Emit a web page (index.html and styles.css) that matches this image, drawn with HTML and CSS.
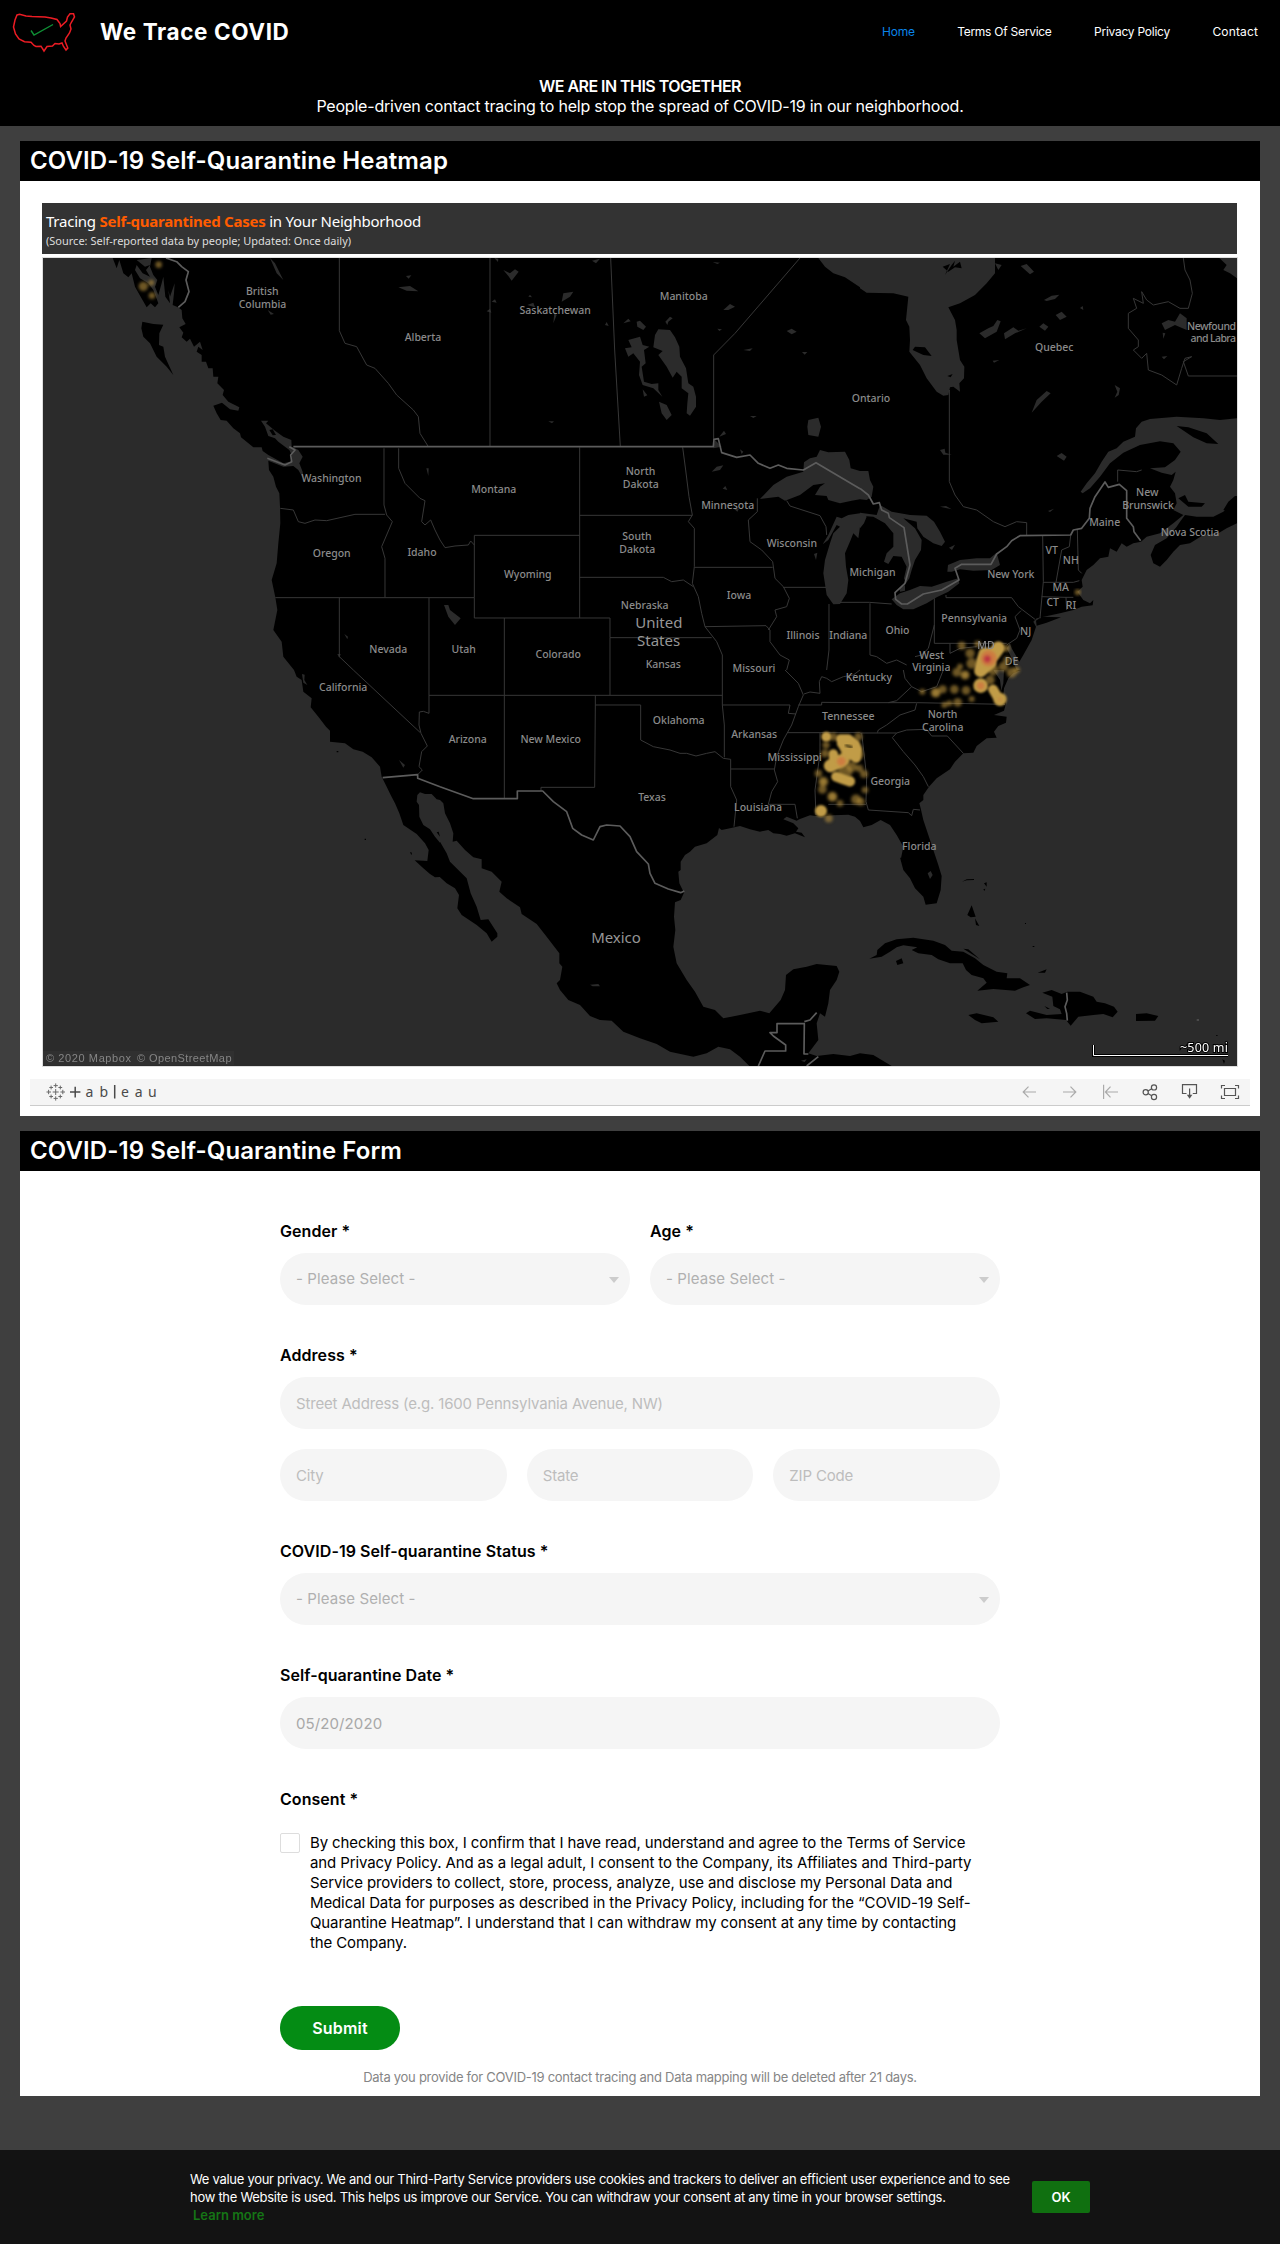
FILE: index.html
```html
<!DOCTYPE html>
<html lang="en">
<head>
<meta charset="utf-8">
<title>We Trace COVID</title>
<link rel="stylesheet" href="styles.css">
</head>
<body>
<header class="site-header">
  <div class="topbar">
    <a class="brand" href="#">
      <svg class="brand-mark" viewBox="10 10 68 44" width="68" height="44"><path class="usa" d="M17 15 19.6 14.3 26 16 32 16.6 45 17 51 18 57 19.5 60 23.5 60.6 26.5 66.5 21 67.5 17 70 13.7 73.5 13.8 74.5 17 71.5 22 70 25 71 29 69.5 33 66 38 65 41 67.8 48 66 50 63.5 46.5 62 43 59 44 55 43.5 52.5 46 47 46.5 44 51 41 46.2 36 46.5 34 45.5 31 42.3 24.5 41.7 19 39 15.5 34 13.5 27 15 20Z"/><path class="tick" d="M31 30.5 34 35 53 24.5"/></svg>
      <span class="brand-name">We Trace COVID</span>
    </a>
    <nav class="menu">
      <a class="active" href="#">Home</a>
      <a href="#">Terms Of Service</a>
      <a href="#">Privacy Policy</a>
      <a class="last" href="#">Contact</a>
    </nav>
  </div>
  <div class="tagline">
    <strong>WE ARE IN THIS TOGETHER</strong>
    <p>People-driven contact tracing to help stop the spread of COVID-19 in our neighborhood.</p>
  </div>
</header>

<main>
<section class="card">
  <h2>COVID-19 Self-Quarantine Heatmap</h2>
  <div class="viz">
    <div class="viz-title">
      <p class="viz-heading">Tracing <b>Self-quarantined Cases</b> in Your Neighborhood</p>
      <p class="viz-source">(Source: Self-reported data by people; Updated: Once daily)</p>
    </div>
    <svg class="map" viewBox="43 258 1194 808" width="1196" height="810">
      <defs>
        <filter id="soft" x="-20%" y="-20%" width="140%" height="140%"><feGaussianBlur stdDeviation="5.5"/></filter>
        <filter id="edge" x="-20%" y="-20%" width="140%" height="140%"><feGaussianBlur stdDeviation="3"/></filter>
      </defs>
      <rect class="land" x="43" y="258" width="1194" height="808"/>

      <!-- north-west -->
      <g transform="translate(20 250) scale(.333333)">
        <path class="sea" d="M69 24H278L290 55 298 30 310 70 325 82 335 70 345 110 362 140 380 172 392 160 405 172 415 160 400 120 385 100 360 85 345 60 350 45 368 70 390 80 378 60 390 45 375 50 350 30 395 24 390 50 400 75 412 90 405 110 415 135 425 100 430 80 436 140 450 160 445 120 450 140 464 100 462 130 458 165 474 172 485 180 487 205 497 222 478 232 490 248 485 262 500 275 510 266 522 290 540 275 548 300 535 290 530 305 545 315 545 335 558 335 565 355 578 355 580 380 595 380 592 400 612 420 608 435 625 455 658 472 655 482 630 478 606 458 580 467 590 490 602 510 620 512 640 535 660 550 663 562 700 592 725 592 728 603 745 615 790 640 812 635 815 615 808 600 795 590 775 575 765 565 745 558 735 530 723 512 745 512 738 520 765 542 790 560 814 570 815 590 835 600 848 620 838 640 848 665 852 690 835 660 820 648 790 650 745 632 747 660 760 680 768 710 778 730 780 770 781 820 775 880 770 940 755 990 766 1042 772 1080 760 1140 785 1175 790 1220 822 1260H69Z"/>
        <path class="land" d="M367 215 400 222 430 224 418 250 417 285 430 290 435 320 460 375 440 350 410 320 390 280 370 260 364 235ZM748 540 758 538 768 555 758 556Z"/>
        <path class="sea" d="M750 24 765 40 790 90 770 70ZM1135 112 1170 108 1195 124 1160 122ZM1158 78 1174 76 1166 86ZM743 180 762 192 752 194ZM1219 655 1226 655 1225 678ZM973 1152 984 1160 982 1168ZM952 1212 962 1212 958 1224Z"/>
        <path class="state" d="M958 24V242L975 280 1010 290 1040 345 1065 355 1105 400 1130 435 1180 480 1195 500 1200 550 1225 590M1092 595V765L1100 795 1117 815 1085 890 1095 925V1042M1136 595V655L1155 700 1200 745 1215 752 1205 815 1215 825 1232 810 1245 840 1260 870M781 775 820 780 835 815 855 820 885 810 920 812 1005 793H1095M766 1043H1260M958 1043V1220L1000 1260M1227 1043V1260"/>
        <path class="nation" d="M820 590H1260M808 590 825 600 812 615 815 635 795 645 742 625M438 24 470 35 485 50 505 65 498 90 507 125 495 155 475 172"/>
      </g>

      <!-- north-centre -->
      <g transform="translate(440 250) scale(.333333)">
        <path class="sea" d="M1135 24 1155 50 1180 70 1215 82 1260 112V24ZM960 747 1000 705 1040 680 1090 665 1092 637 1110 625 1130 620 1140 600 1165 607 1215 605 1228 630 1232 655 1260 663V748L1235 752 1200 760 1165 750 1160 738 1125 735 1140 710 1155 700 1120 705 1080 735 1035 752 1015 740ZM1260 790 1225 795 1205 805 1190 800 1165 855 1148 883 1165 870 1190 825 1200 830 1180 850 1170 880 1155 930 1150 970 1160 1035 1180 1063 1200 1062 1220 1030 1225 990 1218 950 1215 910 1232 870 1240 850 1255 865 1260 830Z"/>
        <path class="sea" d="M655 238 690 240 705 262 718 290 720 320 738 355 745 400 760 410 768 440V470L750 497 740 490 742 460 745 430 725 415V380L710 365 698 383 680 350 655 315 668 303 640 292 645 255ZM555 295 575 292 565 270 600 260 608 285 628 290 612 300 617 340 605 350 612 395 635 402 655 400 655 420 667 440 640 415 608 405 597 375 600 335 580 310 565 320ZM657 455 680 465 695 495 680 510 665 490ZM676 215 690 200 698 205 685 215 682 225ZM590 215 600 212 618 230 610 240 592 230ZM550 220 565 206 572 214ZM608 418 622 436 612 440ZM190 60 210 70 225 58 236 65 215 92 205 78ZM365 155 370 130 400 125 390 140ZM850 180 870 162 885 170 865 180ZM1105 510 1135 503 1143 530 1135 560 1105 555 1102 530ZM820 595 825 570 845 590ZM838 560 852 542 858 552ZM815 665 830 650 850 646 840 660ZM1040 243 1055 236 1070 245 1055 253ZM910 300 938 295 930 303ZM1086 306 1102 306 1094 314ZM12 1065 25 1065 30 1080 62 1105 45 1125 25 1100ZM155 155 165 148 170 158ZM140 184 150 176 154 188ZM265 140 270 134 276 142ZM262 165 280 158 285 172ZM343 188 350 195 340 220ZM495 225 500 216 506 228ZM456 32 480 26 468 40ZM163 24 175 26 174 36ZM325 514 342 514 336 520ZM818 36 840 38 832 42ZM832 236 846 238 838 243ZM930 498 950 498 940 504ZM848 716 856 708 862 720ZM1122 912 1132 908 1128 930ZM900 598 910 605 905 612ZM882 776 897 776 892 785Z"/>
        <path class="state" d="M150 24V590M512 24 524 300 541 590M821 570V315L885 250 1080 24M419 592V1104M419 796H757M419 982H670L695 995 730 990 760 1010M728 592 737 660 747 740 757 795 745 815 763 835V950L757 1000 775 1040 785 1090 795 1130 830 1175 847 1215V1260M763 952H998M103 1043V856H419M103 1043V1104H510V1163H815M510 1163V1260M193 1104V1260M0 1043H103M0 870 15 893 45 888 85 885 92 873 103 885M795 1130 978 1127 990 1140V1175L1020 1215 1048 1230 1040 1260M952 745V785L925 810 930 875 965 900 998 935 1005 985 1030 1010 1048 1045 1040 1070 1005 1080 1010 1100 985 1140M1030 1012H1158M1040 752 1050 768 1140 797 1158 830 1160 855M1167 1062V1200L1160 1260M1200 1057H1260"/>
        <path class="nation" d="M0 590H820L822 568 835 566 845 608 890 622 930 615 955 640 990 655 1015 645 1040 655 1090 660 1128 638 1260 716"/>
      </g>

      <!-- north-east -->
      <g transform="translate(860 250) scale(.333333)">
        <path class="sea" d="M0 24H405V70L380 100 345 135 300 160 265 172 285 210 290 240V270L300 330 313 350 312 385 298 400 300 425 280 410 270 412 265 435 250 437 230 425 200 385 180 345 148 305 150 270 148 230 138 210 145 140 100 130 20 128 0 115ZM0 663H25L30 690 40 710 35 740 20 750 0 748ZM60 765 95 785 150 795 200 797 222 815 240 845 255 875 245 888 220 880 190 860 172 835 170 815 130 805 165 835 185 870 183 900 165 930 155 960 148 985 138 1000 132 985 140 950 125 920 100 918 85 942 72 935 80 910 100 890V850L75 820 40 800 0 797V788L50 795ZM0 790 20 800 12 820 0 835ZM95 1048 120 1030 150 1020 180 1008 215 1010 260 995 295 985 298 1000 265 1025 230 1042 200 1060 160 1078 130 1078 110 1065ZM118 1015 135 1005V1022L120 1025ZM262 965 264 945 300 930 350 925 390 925 410 908 420 945 395 960 340 962 300 958 275 965Z"/>
        <path class="sea" d="M1078 24H1131V85L1110 70 1090 60 1100 45ZM1131 505 1080 510 1030 505 950 500 870 507 845 515 828 535 825 560 790 575 770 595 745 605 725 635 705 670 680 700 662 725 668 730 690 715 720 680 750 640 790 608 840 585 900 574 940 580 962 605 945 630 915 652 870 655 905 668 935 675 947 665 940 690 930 710 945 730 950 760 940 780 970 795 940 820 900 850 860 860 843 875 820 880 800 890 785 880 770 905 750 895 745 920 720 925 700 945 680 960 665 990 668 1010 652 1025 670 1050 690 1060 700 1050 698 1066 665 1070 640 1080 600 1090 530 1105 520 1115 528 1130 515 1170 490 1215 478 1235 455 1195 450 1180 440 1195 455 1225 470 1260H1131Z"/>
        <path class="land" d="M158 300 165 290 195 292 215 318 190 315ZM248 50 270 42 255 75 275 45 285 32 280 50 300 35 305 55 285 52 265 65ZM262 378 278 372 272 382ZM975 795 1010 800 1060 800 1090 785 1110 765 1120 755 1131 760V820L1100 835 1075 850 1030 855 990 880 960 885 940 905 920 930 900 950 880 940 872 915 885 885 920 865 950 830 960 815ZM955 745 975 735 985 755 1035 760 1025 770 985 770ZM1090 780 1105 755 1125 738H1131V765L1110 785ZM950 528 985 532 1040 550 1075 582 1040 580 1000 562ZM528 1112 545 1100 603 1102 560 1118 530 1127Z"/>
        <path class="sea" d="M358 250 385 235 400 228 412 210 422 214 410 245 375 265ZM432 250 460 232 475 242 500 235 465 250 435 268ZM552 150 575 137 598 134 585 147 560 153ZM587 195 605 185 620 200 600 210ZM515 488 530 450 560 423 572 430 545 455ZM590 618 605 609 620 620 612 632ZM905 220 925 210 945 215 960 190 980 205V240L945 225 915 240ZM538 230 550 220 565 230 555 242ZM482 48 500 42 522 65 510 73 498 62ZM405 40 425 45 415 60ZM660 174 668 168 670 180ZM764 405 780 415 776 435 764 443 772 425ZM240 770 258 768 275 778ZM564 783 582 776 570 786ZM240 600 254 596 256 608 275 614 250 614ZM267 893 285 884 276 900ZM905 320 922 318 912 328ZM398 332 418 330 402 338ZM908 248 916 250 910 266Z"/>
        <path class="state" d="M0 1057H28L95 1062M30 1060V1215L50 1220 80 1240 110 1230 140 1245M268 420V695L285 735 310 770 350 780 400 815 435 830 470 815 500 818V855M223 1045V1180H440M258 1035V1043H455L475 1070 525 1108M483 1082 465 1100 480 1140 470 1165 440 1185M548 857 550 995 540 1105M550 997H640L658 992M632 857 628 890 605 900 588 997M652 840 655 960 665 970M545 1040 615 1042H640M618 1042 620 1080M223 1125 205 1195 185 1215 165 1220M970 24 975 60 990 90 997 130 985 175 960 175 925 155 880 165 860 150 845 125 850 160 820 145 830 175 805 190V235L835 270V290L820 300 845 325 860 310 865 360 905 375 950 405 965 355 975 325 995 320 970 335 985 378H1131M773 695V660L830 665 845 660M270 1180V1210L300 1195 350 1190"/>
        <path class="nation" d="M0 715 25 735 40 762 58 758 65 780 85 790 88 803 132 833 150 945 135 1000 105 1028 107 1048 125 1062H142L190 1032 245 1020 297 990 285 955 305 943H393L410 912 440 890 455 872 480 857 632 855 640 840 665 835 688 805 690 775 705 740 735 696 745 712 778 703 800 722V805L820 830 822 845 842 872"/>
      </g>

      <!-- south-west -->
      <g transform="translate(20 670) scale(.333333)">
        <path class="sea" d="M69 0H822L830 20 845 30 850 65 875 85 872 112 895 140 918 170 930 182V215L975 220 1000 238 1028 245 1055 262 1080 290 1085 320 1100 350 1112 375 1125 400 1138 430 1150 465 1190 492 1215 520 1226 540 1222 573 1184 571 1210 595 1230 612 1245 622 1260 621V1188H69ZM1192 375 1200 367 1215 372 1235 372 1250 388 1260 390V518L1245 500 1230 478 1210 465 1198 440 1197 405 1190 395ZM846 12 854 14 853 30 862 45 850 38ZM1137 270 1155 285 1150 293Z"/>
        <path class="land" d="M1170 546 1176 548 1174 556ZM1034 506H1038V510H1034ZM950 243H955V247H950ZM1250 487 1256 485 1260 500Z"/>
        <path class="state" d="M1000 0 1200 187M1227 0V130L1210 124 1198 126 1197 165 1203 190 1222 228 1205 245 1197 290 1207 300 1195 312M1227 76H1260"/>
        <path class="nation" d="M1088 323 1193 314V325L1260 350"/>
      </g>

      <!-- south-centre -->
      <g transform="translate(440 670) scale(.333333)">
        <path class="sea" d="M0 390 10 400 15 430 30 460 40 490 38 515 50 512 75 540 100 562 125 568V595L155 605 185 635 178 665 200 685 240 712 245 732 290 762 320 800 358 850V880L367 890 360 930 350 940 360 960 385 990 420 1005 450 1038 480 1050 515 1052 550 1085 600 1105 650 1122 690 1145 760 1160 800 1150 835 1130 870 1138 900 1160 928 1188H0Z"/>
        <path class="land" d="M0 515 20 550 30 575 55 600 80 625 92 670 110 710 122 750 145 748 172 790V800L155 815 140 790 110 765 65 735 52 715 57 675 45 655 20 640 0 622Z"/>
        <path class="sea" d="M1260 453 1245 440 1225 434 1180 436 1145 440 1110 436 1078 448 1070 452 1040 440 1030 448 1060 460 1075 475 1068 485 1085 488 1095 502 1065 490 1040 497 1020 492 1000 490 985 480 960 485 930 478 900 468 870 475 845 480 837 474 832 495 800 520 765 530 750 545 735 555 722 575V600L715 605 718 640 732 668 722 690 705 697 702 740 706 780 700 830 710 880 740 930 765 965 790 1010 825 1020 850 1045 900 1035 960 1022 988 1030 1022 990 1035 960 1038 915 1060 898 1100 890 1130 882 1190 888 1198 905 1190 930 1170 960 1165 1000 1155 1040 1140 1030 1130 1060 1135 1110 1105 1150 1130 1158 1180 1152 1230 1158 1260 1150ZM450 944 475 942 480 949 458 949ZM1083 1172 1100 1168 1094 1176Z"/>
        <path class="state" d="M0 76H847M193 0V386M510 0V76M466 76V105L464 352H303V363M466 105H602V210L640 230 690 240 720 250 740 250 768 258 800 250 825 245 850 265 872 268V350L890 390 882 470M847 0V105L853 165V262M847 105H1050L1045 130 1068 132M872 297H1003M1035 0 1075 40 1090 75 1075 110 1055 165 1030 210 1010 260 1003 300 1013 335 995 365 985 403H1065L1072 445M1075 105H1145V97L1260 98M1042 188H1260M1140 188V250L1125 360 1128 435M1092 72 1110 66 1140 70 1138 35 1145 20 1160 25 1175 35 1210 20 1240 15 1260 0M1165 403H1260"/>
        <path class="nation" d="M0 350 100 386H232V363H308L340 395 380 425 398 475 425 495 460 510 480 470 500 465 540 468 570 500 590 545 625 582 630 610 645 640 685 657 722 668 733 663M955 1188 975 1143H1037V1125L1000 1098 990 1088H1011V1061H1093L1092 1152H1105M1093 1055 1110 1050 1130 1028M1100 1188 1135 1160"/>
      </g>

      <!-- south-east -->
      <g transform="translate(860 670) scale(.333333)">
        <path class="sea" d="M482 0H1131V1188H95L65 1170 40 1155 0 1150V453L10 472 35 465 62 450 90 465 110 495 130 530 122 570 130 600 150 625 165 655 190 680 197 704 230 700 242 660 245 618 235 585 220 540 205 495 190 450 182 415 178 400 190 390V375L207 350 230 325 270 298 285 275 310 250 340 248 350 228 380 205 410 203 402 185 415 168 438 158 440 140 402 135 432 122 438 100 430 75 432 55 445 25 460 10ZM400 0H432L430 40 424 62 420 30ZM203 610 212 603 218 615 210 627Z"/>
        <path class="land" d="M28 866 50 855 52 840 75 820 110 808 160 803 220 812 255 825 275 842 310 845 345 865 370 885 410 905 442 910 440 925 480 925 510 945 490 952 465 962 400 957 352 962 380 938 370 925 335 915 318 900 308 880 270 880 235 868 215 855 175 850 155 840 172 832 130 826 110 832 90 845 65 860ZM108 873 125 865 130 880 112 885ZM325 1035 350 1030 400 1042 415 1055 365 1060 345 1050ZM547 968 575 960 605 972 622 965 660 965 700 980 710 995 735 1000 762 1010 773 1025 758 1042 730 1032 700 1035 655 1040 632 1067 618 1050 560 1045 525 1047 498 1030 510 1022 560 1035 605 1032 600 1018 580 1008 577 980ZM828 1032 860 1030 895 1038 885 1052 828 1053ZM322 735 335 706 347 740 332 742ZM345 745 358 768 348 765ZM306 635 320 628 342 627V630L320 631ZM372 640 380 637V650L376 645ZM370 658 376 656 373 663ZM533 908 560 898 555 908ZM310 836 325 838 360 868 335 852ZM553 1008 570 1016 562 1017ZM1087 1168 1095 1172 1092 1182ZM1068 1096H1073V1098H1068ZM495 759H498V762H495ZM518 828H523V831H518ZM120 563 135 565V575H125Z"/>
        <path class="faint" d="M1010 1047H1017V1053H1010Z"/>
        <path class="state" d="M0 98H170L435 103M170 100 165 120 120 135 80 165 55 180 52 188M0 189H110L140 180 200 178 215 198H262L310 250M110 189 97 203 130 245 165 285 190 320 205 350M5 189 20 320 18 395 25 420 145 428 155 437 160 418 180 420M85 98 110 92 155 50 185 65 230 50 250 0M130 0 135 25 155 50M0 403H18"/>
        <path class="nation" d="M620 968 622 990 615 1010 620 1030 622 1052"/>
      </g>

      <g class="labels">
        <text x="262.3" y="295.3">British</text><text x="262.5" y="308">Columbia</text><text x="423" y="341">Alberta</text><text x="555.2" y="314">Saskatchewan</text><text x="683.7" y="300">Manitoba</text><text x="871" y="402">Ontario</text><text x="1054.3" y="351">Quebec</text><text class="from" x="1187" y="329.5" textLength="49">Newfound</text><text class="from" x="1190.5" y="342" textLength="45.5">and Labra</text>
        <text x="331.5" y="482">Washington</text><text x="331.7" y="557">Oregon</text><text x="422" y="555.5">Idaho</text><text x="493.8" y="492.5">Montana</text><text x="640.5" y="475">North</text><text x="640.7" y="488">Dakota</text><text x="637" y="540.3">South</text><text x="637.3" y="553">Dakota</text><text x="527.8" y="578">Wyoming</text><text x="727.7" y="509">Minnesota</text><text x="791.8" y="546.7">Wisconsin</text><text x="739" y="598.7">Iowa</text><text x="644.7" y="608.7">Nebraska</text><text x="663.3" y="667.7">Kansas</text><text x="803" y="638.5">Illinois</text><text x="848.3" y="638.5">Indiana</text><text x="897.5" y="633.5">Ohio</text><text x="872.5" y="576">Michigan</text><text x="463.7" y="653">Utah</text><text x="388.3" y="653">Nevada</text><text x="558.2" y="658">Colorado</text><text x="343.2" y="691.3">California</text><text x="754" y="672.3">Missouri</text><text x="467.7" y="743">Arizona</text><text x="550.7" y="743">New Mexico</text><text x="678.7" y="724.3">Oklahoma</text><text x="754.2" y="738.3">Arkansas</text><text x="794.7" y="761">Mississippi</text><text x="758" y="811">Louisiana</text><text x="652" y="801.3">Texas</text><text x="848.3" y="720">Tennessee</text><text x="868.8" y="681.3">Kentucky</text><text x="931.7" y="658.7">West</text><text x="931.3" y="671.3">Virginia</text><text x="942.5" y="718">North</text><text x="942.7" y="730.7">Carolina</text><text x="890.3" y="785">Georgia</text><text x="919.3" y="850.3">Florida</text><text x="1011.5" y="664.5">DE</text><text x="1025.7" y="635.3">NJ</text><text x="974.2" y="621.5">Pennsylvania</text><text x="1010.8" y="578">New York</text><text x="1051.7" y="554.3">VT</text><text x="1070.8" y="564.3">NH</text><text x="1060.7" y="591.3">MA</text><text x="1052.7" y="606.3">CT</text><text x="1071" y="609">RI</text><text x="1104.7" y="525.5">Maine</text><text x="1147.3" y="496">New</text><text x="1148" y="508.7">Brunswick</text><text x="1190" y="536.3">Nova Scotia</text>
        <text class="country" x="658.8" y="627.7">United</text><text class="country" x="658.6" y="646">States</text><text class="country" x="616" y="943">Mexico</text>
      </g>

      <!-- reported cases -->
      <g class="glow" transform="translate(20 250) scale(.333333)" filter="url(#soft)">
        <circle cx="416" cy="44" r="10"/><circle cx="394" cy="98" r="9"/><circle cx="396" cy="137" r="10"/><circle cx="370" cy="109" r="14"/>
      </g>
      <g class="glow" transform="translate(860 250) scale(.333333)" filter="url(#soft)"><circle cx="653" cy="1027" r="9"/></g>
      <g transform="translate(790 620) scale(.333333)">
        <g class="glow" filter="url(#soft)">
          <circle cx="515" cy="77" r="12"/><circle cx="540" cy="100" r="14"/><circle cx="525" cy="165" r="14"/><circle cx="525" cy="165" r="10"/><circle cx="500" cy="157" r="13"/><circle cx="397" cy="215" r="9"/><circle cx="437" cy="218" r="15"/><circle cx="437" cy="218" r="11"/><circle cx="458" cy="208" r="12"/><circle cx="493" cy="208" r="13"/><circle cx="528" cy="211" r="13"/><circle cx="545" cy="237" r="9"/><circle cx="503" cy="247" r="13"/><circle cx="463" cy="255" r="9"/><circle cx="478" cy="250" r="9"/><circle cx="640" cy="140" r="14"/><circle cx="665" cy="158" r="15"/><circle cx="680" cy="150" r="10"/><circle cx="610" cy="150" r="16"/><circle cx="545" cy="130" r="16"/><circle cx="563" cy="72" r="10"/><circle cx="600" cy="180" r="14"/><circle cx="510" cy="140" r="9"/><circle cx="650" cy="85" r="10"/><circle cx="650" cy="120" r="10"/>
          <circle cx="100" cy="485" r="15"/><circle cx="100" cy="485" r="10"/><circle cx="127" cy="530" r="15"/><circle cx="127" cy="530" r="12"/><circle cx="198" cy="538" r="15"/><circle cx="212" cy="545" r="12"/><circle cx="105" cy="400" r="12"/><circle cx="85" cy="460" r="11"/><circle cx="222" cy="462" r="12"/><circle cx="225" cy="510" r="10"/><circle cx="116" cy="595" r="12"/><circle cx="150" cy="550" r="10"/><circle cx="97" cy="508" r="13"/><circle cx="108" cy="375" r="11"/><circle cx="208" cy="445" r="11"/><circle cx="130" cy="350" r="12"/><circle cx="205" cy="350" r="12"/><circle cx="205" cy="405" r="15"/><circle cx="175" cy="395" r="22"/><circle cx="165" cy="455" r="22"/><circle cx="185" cy="440" r="16"/>
        </g>
        <g class="hot" filter="url(#edge)">
          <path d="M625 84 610 105 585 102 578 125 572 152 600 128 590 112"/><circle cx="572" cy="197" r="22"/><path class="mid" d="M609 208 622 230"/><circle cx="630" cy="238" r="20"/>
          <circle cx="109" cy="350" r="15"/><path class="mid" d="M152 357 175 357 195 372 202 388 198 414 170 392 155 370"/><path class="mid" d="M130 402 132 418 155 420 170 405"/><path d="M121 437 150 425 160 420"/><path class="mid" d="M138 470 160 478 180 485"/><circle cx="180" cy="484" r="15"/><circle cx="93" cy="573" r="18"/>
        </g>
        <path class="gap" filter="url(#edge)" d="M168 376 185 382"/>
        <g filter="url(#soft)"><circle class="warm" cx="596" cy="115" r="24"/><circle class="red" cx="592" cy="117" r="11"/><circle class="warm" cx="572" cy="197" r="11"/><circle class="warm" cx="154" cy="424" r="13"/><circle class="warm" cx="630" cy="238" r="6" opacity=".5"/></g>
      </g>
      <g class="labels"><text x="986" y="649.3">MD</text></g>

      <rect class="credit-bg" x="43" y="1051" width="191" height="14"/>
      <text class="credit" x="46" y="1062" textLength="85">© 2020 Mapbox</text><text class="credit" x="137" y="1062" textLength="94.5">© OpenStreetMap</text>
      <path class="scale-shadow" d="M1093.5 1045V1055.5H1228"/><path class="scale" d="M1093.5 1045V1055.5H1228"/>
      <text class="scale-text" x="1228" y="1052" textLength="48">~500 mi</text>
    </svg>
  </div>
  <div class="toolbar">
    <svg class="tableau" viewBox="0 0 120 20" width="120" height="20">
      <path class="spark" d="M6.7 10H12.7M9.7 7V13M.5 10H5M2.6 7.8V12.2M14.4 10H19M16.8 7.8V12.2M7.6 3.6H11.8M9.7 1.4V5.7M7.6 16.4H11.8M9.7 14.3V18.6M3.3 5.5H7M5.1 3.6V7.4M12.4 5.5H16.2M14.3 3.6V7.4M3.3 14.5H7M5.1 12.6V16.4M12.4 14.5H16.2M14.3 12.6V16.4"/>
      <path class="bars" d="M24 10H34.4M29.2 4.8V15.4M68.7 3V16.5"/>
      <text y="15"><tspan x="39.4">a</tspan><tspan x="53.6">b</tspan><tspan x="75">e</tspan><tspan x="88.7">a</tspan><tspan x="102">u</tspan></text>
    </svg>
    <div class="tools">
      <svg class="off" viewBox="0 0 20 20"><path d="M16 10H3.2M8.5 4.7 3.2 10 8.5 15.3"/></svg>
      <svg class="off" viewBox="0 0 20 20"><path d="M3 10H15.8M10.5 4.7 15.8 10 10.5 15.3"/></svg>
      <svg class="off" viewBox="0 0 20 20"><path d="M3.6 2.7V17M18 10H5.4M10.5 4.7 5.4 10 10.5 15.3"/></svg>
      <svg viewBox="0 0 20 20"><circle cx="5.7" cy="10.3" r="2.6"/><circle cx="14" cy="5.4" r="2.6"/><circle cx="14" cy="15" r="2.6"/><path d="M8 9 11.7 6.7M8 11.6 11.7 13.8"/></svg>
      <svg viewBox="0 0 20 20"><path d="M6.5 11.5H2.5V2.7H16.5V11.5H12.8M9.6 6.5V14"/><path class="solid" d="M6.8 12.8H12.4L9.6 16.8Z"/></svg>
      <svg viewBox="0 0 20 20"><path d="M1.5 6.5V3.5H5M15 3.5H18.5V6.5M18.5 13.5V16.5H15M5 16.5H1.5V13.5M4.5 6.5H15.5V13.5H4.5Z"/></svg>
    </div>
  </div>
</section>

<section class="card">
  <h2>COVID-19 Self-Quarantine Form</h2>
  <form class="form">
    <div class="row">
      <div class="field"><label>Gender *</label><div class="select"><select><option>- Please Select -</option></select></div></div>
      <div class="field"><label>Age *</label><div class="select"><select><option>- Please Select -</option></select></div></div>
    </div>
    <div class="field">
      <label>Address *</label>
      <input type="text" placeholder="Street Address (e.g. 1600 Pennsylvania Avenue, NW)">
      <div class="row parts">
        <input type="text" placeholder="City">
        <input type="text" placeholder="State">
        <input type="text" placeholder="ZIP Code">
      </div>
    </div>
    <div class="field"><label>COVID-19 Self-quarantine Status *</label><div class="select"><select><option>- Please Select -</option></select></div></div>
    <div class="field date"><label>Self-quarantine Date *</label><input type="text" value="05/20/2020"></div>
    <div class="field consent">
      <label>Consent *</label>
      <div class="agree">
        <span class="box"></span>
        <p>By checking this box, I confirm that I have read, understand and agree to the Terms of Service<br>and Privacy Policy. And as a legal adult, I consent to the Company, its Affiliates and Third-party<br>Service providers to collect, store, process, analyze, use and disclose my Personal Data and<br>Medical Data for purposes as described in the Privacy Policy, including for the “COVID-19 Self-<br>Quarantine Heatmap”. I understand that I can withdraw my consent at any time by contacting<br>the Company.</p>
      </div>
    </div>
    <button type="button" class="submit">Submit</button>
    <p class="note">Data you provide for COVID-19 contact tracing and Data mapping will be deleted after 21 days.</p>
  </form>
</section>
</main>

<footer class="cookies">
  <p>We value your privacy. We and our Third-Party Service providers use cookies and trackers to deliver an efficient user experience and to see<br>how the Website is used. This helps us improve our Service. You can withdraw your consent at any time in your browser settings.<br><a href="#">Learn more</a></p>
  <button type="button">OK</button>
</footer>
</body>
</html>
```
FILE: styles.css
```css
* { box-sizing: border-box; }
body { margin: 0; background: #3f3f3f; color: #000; font: 16px/20px Inter, sans-serif; }
p { margin: 0; }
a { color: inherit; text-decoration: none; }
svg { display: block; }

/* header */
.site-header { height: 126px; background: #000; color: #fff; }
.topbar { display: flex; justify-content: space-between; align-items: center; height: 64px; padding: 0 22px 0 10px; }
.brand { display: flex; align-items: center; gap: 22px; }
.usa { fill: none; stroke: #ec1c24; stroke-width: 1.5; }
.tick { fill: none; stroke: #0f8f35; stroke-width: 1.4; }
.brand-name { font-size: 22.5px; font-weight: 700; letter-spacing: .6px; }
.menu { display: flex; gap: 42.5px; padding-bottom: 1px; font-size: 12px; letter-spacing: -.26px; }
.menu .active { color: #0a84e8; }
.menu .last { letter-spacing: .15px; }
.tagline { padding-top: 12px; text-align: center; letter-spacing: -.21px; }
.tagline strong { font-weight: 600; letter-spacing: -.54px; }

/* cards */
.card { margin: 15px 20px 0; background: #fff; }
h2 { height: 40px; margin: 0; padding-left: 10px; background: #000; color: #fff; font-size: 24px; line-height: 40px; font-weight: 600; letter-spacing: .1px; }

/* map */
.viz { padding: 22px 22px 0; }
.viz-title { width: 1195px; height: 51px; padding: 8px 0 0 4px; background: #333; color: #fff; font-family: "Noto Sans", sans-serif; }
.viz-heading { font-size: 15px; letter-spacing: -.24px; }
.viz-heading b { color: #ff5c00; }
.viz-source { font-size: 11px; color: #ddd; }
.map { margin-top: 3px; border: 1px solid #dedede; }
.land { fill: #000; }
.sea { fill: #2b2b2b; }
.faint { fill: #4a4a4a; }
.state { fill: none; stroke: #373737; stroke-width: 3; }
.nation { fill: none; stroke: #5c5c5c; stroke-width: 5; stroke-linejoin: round; }
.labels { fill: #8b8b8b; font: 500 10.5px "Noto Sans", sans-serif; text-anchor: middle; letter-spacing: -.02px; }
.labels .from { text-anchor: start; }
.labels .country { font-size: 15px; font-weight: 400; fill: #969696; }
.glow { fill: #b8913c; }
.glow circle { opacity: .6; }
.hot { fill: #c19c47; }
.hot path { fill: none; stroke: #c19c47; stroke-width: 39; stroke-linecap: round; stroke-linejoin: round; }
.hot .mid { stroke-width: 29; }
.gap { fill: none; stroke: #4a3b18; stroke-width: 7; stroke-linecap: round; }
.warm { fill: #cd7c40; }
.red { fill: #bd3540; }
.credit-bg { fill: #303030; }
.credit { fill: #858585; font: 11px "Liberation Sans", sans-serif; }
.scale, .scale-shadow { fill: none; stroke: #fff; stroke-width: 1; }
.scale-shadow { stroke: #000; stroke-width: 3; }
.scale-text { fill: #fff; stroke: #000; stroke-width: 2px; paint-order: stroke; font: 12.5px "Noto Sans", sans-serif; text-anchor: end; }

.toolbar { display: flex; align-items: center; justify-content: space-between; height: 27px; margin: 12px 10px 0; padding: 0 10px 0 16px; background: #f5f5f5; border-bottom: 1px solid #ccc; }
.card:first-child { padding-bottom: 10px; }
.spark { fill: none; stroke: #6a6a6a; stroke-width: 1; }
.bars { fill: none; stroke: #4a4a4a; stroke-width: 1.5; }
.tableau text { fill: #4a4a4a; font: 14px "Noto Sans", sans-serif; }
.tools { display: flex; gap: 20px; }
.tools svg { width: 20px; height: 20px; fill: none; stroke: #555; stroke-width: 1.2; }
.tools .off { stroke: #aaa; }
.tools .solid { fill: #555; stroke: none; }

/* form */
.form { width: 720px; height: 925px; margin: 0 auto; padding: 50px 0 0; }
.row { display: flex; gap: 20px; }
.row > * { flex: 1; min-width: 0; }
.field { margin-bottom: 40px; }
label { display: block; margin-bottom: 12px; font-weight: 600; letter-spacing: .06px; }
input, select { display: block; width: 100%; height: 52px; margin: 0; padding: 0 16px; border: 0; border-radius: 26px; background: #f5f5f5; color: #b0b0b0; font: 15px/20px Inter, sans-serif; letter-spacing: -.16px; appearance: none; }
select { letter-spacing: .1px; }
input::placeholder { color: #bdbdbd; opacity: 1; }
.date input { color: #a8a8a8; letter-spacing: .1px; }
.select { position: relative; }
.select::after { content: ""; position: absolute; right: 11px; top: 24px; border: 5px solid transparent; border-top: 6px solid #ccc; border-bottom: 0; }
.parts { margin-top: 20px; }
.consent { margin-bottom: 0; }
.consent label { margin-bottom: 24px; }
.agree { display: flex; gap: 10px; font-size: 15px; letter-spacing: -.12px; white-space: nowrap; }
.box { flex: none; width: 20px; height: 20px; border: 1px solid #ddd; border-radius: 2px; background: #fff; }
.submit { display: block; width: 120px; height: 44px; margin-top: 53px; border: 0; border-radius: 22px; background: #048c14; color: #fff; font: 600 16px/20px Inter, sans-serif; letter-spacing: .2px; }
.note { margin-top: 18px; text-align: center; color: #858585; font-size: 13px; line-height: 18px; letter-spacing: -.27px; }

/* cookie notice */
.cookies { display: flex; align-items: center; gap: 22px; height: 94px; margin-top: 54px; padding-left: 190px; background: #131313; color: #fff; }
.cookies p { width: 820px; padding-bottom: 1px; font-size: 13px; line-height: 18px; letter-spacing: -.29px; white-space: nowrap; }
.cookies a { margin-left: 3px; color: #157515; font-weight: 600; letter-spacing: 0; }
.cookies button { width: 58px; height: 32px; margin-bottom: 1px; padding: 0; border: 0; border-radius: 2px; background: #107010; color: #fff; font: 600 13px/18px Inter, sans-serif; }
```
